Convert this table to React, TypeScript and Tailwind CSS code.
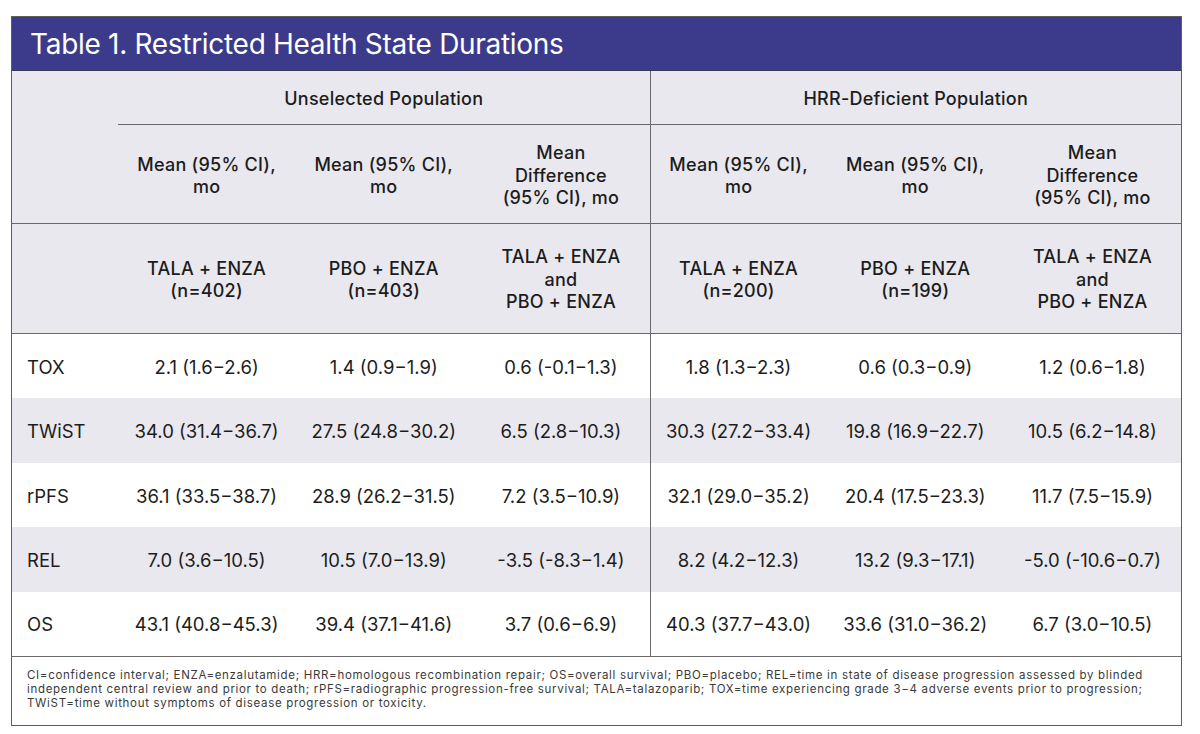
import React from "react";

const rows = [
  ["TOX", "2.1 (1.6−2.6)", "1.4 (0.9−1.9)", "0.6 (-0.1−1.3)", "1.8 (1.3−2.3)", "0.6 (0.3−0.9)", "1.2 (0.6−1.8)"],
  ["TWiST", "34.0 (31.4−36.7)", "27.5 (24.8−30.2)", "6.5 (2.8−10.3)", "30.3 (27.2−33.4)", "19.8 (16.9−22.7)", "10.5 (6.2−14.8)"],
  ["rPFS", "36.1 (33.5−38.7)", "28.9 (26.2−31.5)", "7.2 (3.5−10.9)", "32.1 (29.0−35.2)", "20.4 (17.5−23.3)", "11.7 (7.5−15.9)"],
  ["REL", "7.0 (3.6−10.5)", "10.5 (7.0−13.9)", "-3.5 (-8.3−1.4)", "8.2 (4.2−12.3)", "13.2 (9.3−17.1)", "-5.0 (-10.6−0.7)"],
  ["OS", "43.1 (40.8−45.3)", "39.4 (37.1−41.6)", "3.7 (0.6−6.9)", "40.3 (37.7−43.0)", "33.6 (31.0−36.2)", "6.7 (3.0−10.5)"],
];

function MeanHead() {
  return (
    <>
      Mean (95% CI),
      <br />
      mo
    </>
  );
}
function DiffHead() {
  return (
    <>
      Mean
      <br />
      Difference
      <br />
      (95% CI), mo
    </>
  );
}
function ArmHead({ arm, n }: { arm: string; n: string }) {
  return (
    <>
      {arm}
      <br />({n})
    </>
  );
}
function BothHead() {
  return (
    <>
      TALA + ENZA
      <br />
      and
      <br />
      PBO + ENZA
    </>
  );
}

export default function App() {
  const head = "flex items-center justify-center text-center font-medium text-[18px] tracking-[0.25px] leading-[22.5px] text-[#1c1c1c]";
  return (
    <div className="w-[1200px] h-[734px] bg-white pt-[16px] pl-[11px]" style={{ fontFamily: "Inter, 'Noto Sans', sans-serif" }}>
      <div className="w-[1171px] border border-[#5e5e5e] bg-white">
        <div className="h-[54px] bg-[#3c3b8b] border-b border-[#3a3a5a] flex items-center pl-[18px] pt-[1px]">
          <span className="text-white text-[28px] tracking-[-0.3px] leading-none">Table 1. Restricted Health State Durations</span>
        </div>
        <div className="grid grid-cols-[106px_repeat(6,1fr)] bg-[#e9e8ee]">
          {/* Row A */}
          <div className="h-[54px]" />
          <div className={`${head} col-span-3 border-b border-[#6a6a6a] pt-[3px]`}>Unselected Population</div>
          <div className={`${head} col-span-3 border-b border-l border-[#6a6a6a] pt-[3px]`}>HRR-Deficient Population</div>
          {/* Row B */}
          <div className="h-[99px] border-b border-[#6a6a6a]" />
          <div className={`${head} border-b border-[#6a6a6a] pt-[4px]`}><MeanHead /></div>
          <div className={`${head} border-b border-[#6a6a6a] pt-[4px]`}><MeanHead /></div>
          <div className={`${head} border-b border-[#6a6a6a] pt-[4px]`}><DiffHead /></div>
          <div className={`${head} border-b border-l border-[#6a6a6a] pt-[4px]`}><MeanHead /></div>
          <div className={`${head} border-b border-[#6a6a6a] pt-[4px]`}><MeanHead /></div>
          <div className={`${head} border-b border-[#6a6a6a] pt-[4px]`}><DiffHead /></div>
          {/* Row C */}
          <div className="h-[110px] border-b border-[#6a6a6a]" />
          <div className={`${head} border-b border-[#6a6a6a] pt-[3px]`}><ArmHead arm="TALA + ENZA" n="n=402" /></div>
          <div className={`${head} border-b border-[#6a6a6a] pt-[3px]`}><ArmHead arm="PBO + ENZA" n="n=403" /></div>
          <div className={`${head} border-b border-[#6a6a6a] pt-[3px]`}><BothHead /></div>
          <div className={`${head} border-b border-l border-[#6a6a6a] pt-[3px]`}><ArmHead arm="TALA + ENZA" n="n=200" /></div>
          <div className={`${head} border-b border-[#6a6a6a] pt-[3px]`}><ArmHead arm="PBO + ENZA" n="n=199" /></div>
          <div className={`${head} border-b border-[#6a6a6a] pt-[3px]`}><BothHead /></div>
        </div>
        <div className="border-b border-[#6a6a6a]">
          {rows.map((r, i) => (
            <div
              key={r[0]}
              className={`grid grid-cols-[106px_repeat(6,1fr)] h-[64.4px] text-[18.5px] text-[#1c1c1c] ${i % 2 === 1 ? "bg-[#e9e8ee]" : "bg-white"}`}
            >
              {r.map((c, j) => (
                <div
                  key={j}
                  className={`flex items-center pt-[3px] ${j === 0 ? "pl-[15px]" : "justify-center"} ${j === 4 ? "border-l border-[#6a6a6a]" : ""}`}
                >
                  {c}
                </div>
              ))}
            </div>
          ))}
        </div>
        <div className="pt-[11px] pb-[15px] pl-[15px] pr-[6px] text-[11.5px] tracking-[0.68px] leading-[14px] text-[#3a3a3a] whitespace-nowrap">
          CI=confidence interval; ENZA=enzalutamide; HRR=homologous recombination repair; OS=overall survival; PBO=placebo; REL=time in state of disease progression assessed by blinded
          <br />
          independent central review and prior to death; rPFS=radiographic progression-free survival; TALA=talazoparib; TOX=time experiencing grade 3−4 adverse events prior to progression;
          <br />
          TWiST=time without symptoms of disease progression or toxicity.
        </div>
      </div>
    </div>
  );
}
